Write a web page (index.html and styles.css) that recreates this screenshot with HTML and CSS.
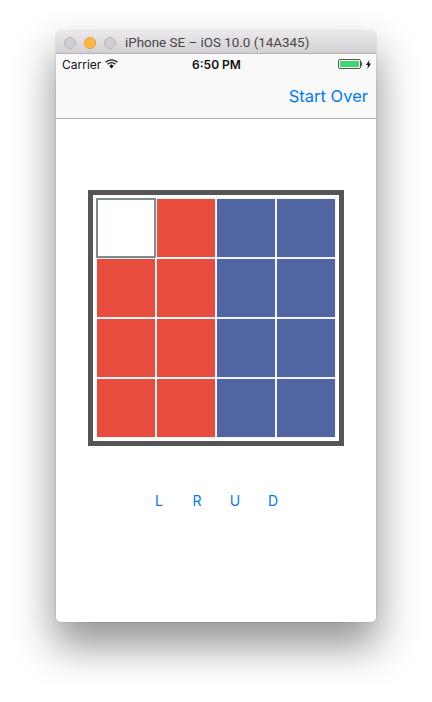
FILE: index.html
```html
<!DOCTYPE html>
<html lang="en">
<head>
<meta charset="utf-8">
<title>iPhone SE – iOS 10.0 (14A345)</title>
<link rel="stylesheet" href="styles.css">
</head>
<body>
<div class="window">
  <div class="titlebar">
    <div class="lights">
      <span class="light"></span>
      <span class="light light-active"></span>
      <span class="light"></span>
    </div>
    <span class="title">iPhone SE – iOS 10.0 (14A345)</span>
  </div>
  <div class="navbar">
    <div class="status">
      <div class="status-left">
        <span>Carrier</span>
        <svg class="wifi" width="13" height="10" viewBox="0 0 13 10">
          <path d="M0.6 3.2 A8.4 8.4 0 0 1 12.4 3.2" fill="none" stroke="#111" stroke-width="1.3"/>
          <path d="M2.6 5.2 A5.6 5.6 0 0 1 10.4 5.2" fill="none" stroke="#111" stroke-width="1.3"/>
          <path d="M4.3 7 L6.5 5.2 L8.7 7 L6.5 9.4 Z" fill="#111"/>
        </svg>
      </div>
      <span class="clock">6:50 PM</span>
      <div class="status-right">
        <span class="battery"><span class="battery-fill"></span></span>
        <span class="battery-tip"></span>
        <svg class="bolt" width="5" height="9" viewBox="0 0 5 9">
          <path d="M3.4 0 L0 5 L2 5 L1.4 9 L5 3.6 L2.9 3.6 Z" fill="#111"/>
        </svg>
      </div>
    </div>
    <div class="nav-actions"><span class="start-over">Start Over</span></div>
  </div>
  <div class="content">
    <div class="board">
      <div class="cell cell-empty"></div>
      <div class="cell cell-red"></div>
      <div class="cell cell-blue"></div>
      <div class="cell cell-blue"></div>
      <div class="cell cell-red"></div>
      <div class="cell cell-red"></div>
      <div class="cell cell-blue"></div>
      <div class="cell cell-blue"></div>
      <div class="cell cell-red"></div>
      <div class="cell cell-red"></div>
      <div class="cell cell-blue"></div>
      <div class="cell cell-blue"></div>
      <div class="cell cell-red"></div>
      <div class="cell cell-red"></div>
      <div class="cell cell-blue"></div>
      <div class="cell cell-blue"></div>
    </div>
    <div class="moves">
      <span class="move">L</span>
      <span class="move">R</span>
      <span class="move">U</span>
      <span class="move">D</span>
    </div>
  </div>
</div>
</body>
</html>
```
FILE: styles.css
```css
* { box-sizing: border-box; }
html, body { height: 100%; }
body {
  margin: 0;
  background: #fff;
  overflow: hidden;
  padding: 31px 56px 0;
  font-family: "Inter", "Liberation Sans", sans-serif;
}
.window {
  width: 320px;
  height: 591px;
  border-radius: 5px;
  overflow: hidden;
  background: #fff;
  display: flex;
  flex-direction: column;
}
body::before {
  content: "";
  position: absolute;
  left: 56px;
  top: 31px;
  width: 320px;
  height: 591px;
  border-radius: 5px;
  box-shadow: 0 0 1px rgba(0,0,0,.5), 0 22px 40px 2px rgba(0,0,0,.42);
  z-index: -1;
}
.titlebar {
  height: 23px;
  flex: none;
  display: flex;
  align-items: center;
  background: linear-gradient(#ebe9eb, #d2d0d2);
  border-bottom: 1px solid #b4b2b4;
  padding: 1px 0 0 8px;
}
.lights { display: flex; gap: 8px; }
.light {
  width: 12px;
  height: 12px;
  border-radius: 50%;
  background: #d0ced0;
  border: 1px solid #bab8ba;
}
.light-active { background: #fdb73f; border-color: #e5a138; }
.title {
  margin-left: 9px;
  font-size: 13.4px;
  color: #484748;
  font-family: "Roboto", "Liberation Sans", sans-serif;
  white-space: nowrap;
}
.navbar {
  height: 65px;
  flex: none;
  background: #f9f9f9;
  border-bottom: 1px solid #b2b2b2;
  display: flex;
  flex-direction: column;
}
.status {
  height: 20px;
  flex: none;
  display: grid;
  grid-template-columns: 1fr auto 1fr;
  align-items: center;
  padding: 0 5px 0 6px;
  font-size: 12px;
  color: #111;
}
.status-left { display: flex; align-items: center; gap: 4px; }
.wifi { display: block; }
.clock { font-weight: 600; }
.status-right { display: flex; align-items: center; justify-content: flex-end; }
.battery {
  width: 23px;
  height: 10px;
  border: 1px solid #555;
  border-radius: 2px;
  padding: 1px;
  display: flex;
}
.battery-fill { flex: 1; background: #3cd971; }
.battery-tip { width: 1px; height: 4px; background: #555; margin-right: 4px; }
.nav-actions {
  flex: 1;
  display: flex;
  align-items: center;
  justify-content: flex-end;
  padding: 0 8px 1px 0;
}
.start-over { font-size: 16.5px; color: #007aff; }
.content {
  flex: 1;
  display: flex;
  flex-direction: column;
  align-items: center;
  padding-top: 71px;
}
.board {
  width: 256px;
  height: 256px;
  border: 5px solid #555;
  padding: 3px;
  display: grid;
  grid-template-columns: repeat(4, 60px);
  grid-template-rows: repeat(4, 60px);
  background: #fff;
}
.cell { border: 1px solid #f0f3f8; }
.cell-red { background: #e74c3c; }
.cell-blue { background: #5065a1; }
.cell-empty { background: #fff; border: 2px solid #7f8c8d; }
.moves {
  margin-top: 46px;
  width: 152px;
  display: flex;
  justify-content: space-between;
  font-size: 14px;
  color: #007aff;
}
.move { width: 38px; text-align: center; }
```
